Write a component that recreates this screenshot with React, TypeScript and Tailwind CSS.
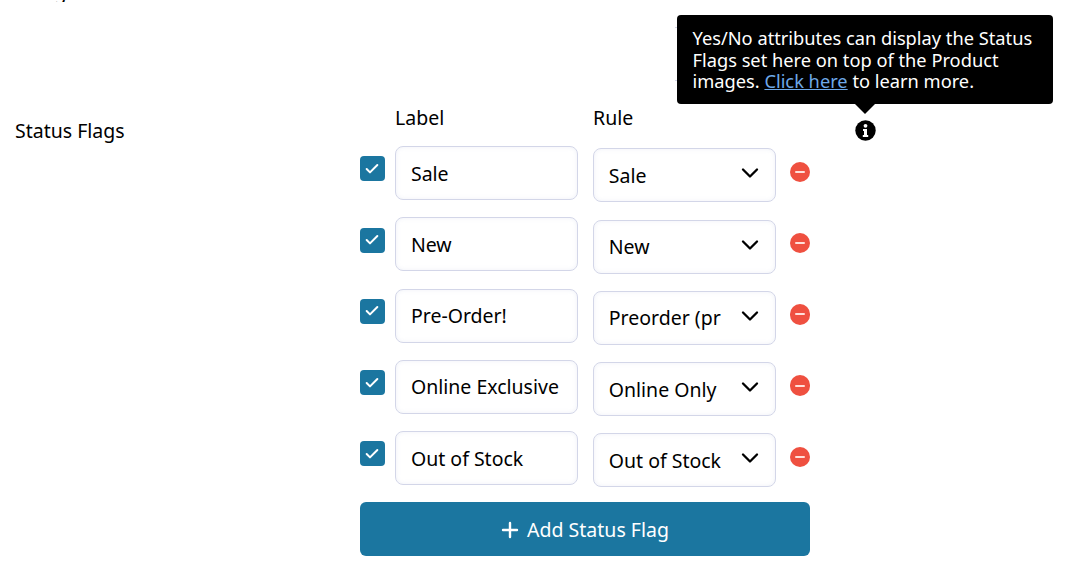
import React from 'react';
import { Check, ChevronDown, Plus } from 'lucide-react';

const flags = [
  { label: 'Sale', rule: 'Sale' },
  { label: 'New', rule: 'New' },
  { label: 'Pre-Order!', rule: 'Preorder (pr' },
  { label: 'Online Exclusive', rule: 'Online Only' },
  { label: 'Out of Stock', rule: 'Out of Stock' },
];

function FlagRow({ label, rule }: { label: string; rule: string }) {
  return (
    <div className="flex items-start h-[54px]">
      <div className="w-[25px] h-[25px] mt-[10.25px] rounded-[4px] bg-[#1b76a0] flex items-center justify-center text-white">
        <Check size={16} strokeWidth={3} />
      </div>
      <div className="ml-[10px] w-[183.25px] h-[54px] pl-[15px] pt-[1px] flex items-center border border-[#d3d6e8] rounded-[8px] shadow-[inset_0_0_4px_rgba(200,205,230,0.3)]">
        {label}
      </div>
      <div className="ml-[15px] mt-[2.25px] w-[183.25px] h-[54px] pl-[15px] flex items-center relative border border-[#d3d6e8] rounded-[8px] shadow-[inset_0_0_4px_rgba(200,205,230,0.3)]">
        <span className="pt-[1px]">{rule}</span>
        <ChevronDown size={28} strokeWidth={2} className="absolute right-[11px] top-[10px] text-black" />
      </div>
      <div className="ml-[14px] mt-[15.6px] w-[20.5px] h-[20.5px] rounded-full bg-[#ef5040] flex items-center justify-center">
        <div className="w-[10px] h-[2px] bg-[#ffe0da] rounded-sm" />
      </div>
    </div>
  );
}

export default function App() {
  return (
    <div className="relative w-[1066px] h-[566px] overflow-hidden bg-white text-black text-[19.5px] leading-[24px] font-['Noto_Sans',sans-serif]">
      <div className="h-[2px] overflow-hidden pl-[15px]">
        <div className="-mt-[20px]">Design</div>
      </div>

      <div className="flex pt-[104px]">
        <div className="w-[360px] pl-[15px] pt-[13px]">Status Flags</div>
        <div className="w-[450px]">
          <div className="flex h-[24px] mb-[16px] pl-[35px]">
            <div className="w-[198px]">Label</div>
            <div>Rule</div>
          </div>
          <div className="flex flex-col gap-[17.25px]">
            {flags.map((f) => (
              <FlagRow key={f.label} label={f.label} rule={f.rule} />
            ))}
          </div>
          <button className="mt-[17px] w-[450px] h-[54px] pt-[1px] pr-[3px] rounded-[6px] bg-[#1b76a0] text-white flex items-center justify-center gap-[5px]">
            <Plus size={24} strokeWidth={2.4} />
            Add Status Flag
          </button>
        </div>
      </div>

      {/* Faint edges of the field behind the tooltip */}
      <div className="absolute left-[675px] top-[27px] w-[2px] h-[1px] bg-[#d3d6e8]" />
      <div className="absolute left-[675px] top-[80px] w-[2px] h-[1px] bg-[#d3d6e8]" />

      {/* Tooltip */}
      <div className="absolute left-[677px] top-[15px] w-[376px] h-[89px] rounded-[4px] bg-black text-white pl-[15.5px] pr-[10px] pt-[12px] text-[18.25px] leading-[21.6px]">
        Yes/No attributes can display the Status Flags set here on top of the Product images.{' '}
        <a className="text-[#6ea8e8] underline">Click here</a> to learn more.
      </div>
      <div className="absolute left-[855px] top-[104px] w-0 h-0 border-l-[10px] border-r-[10px] border-t-[10px] border-l-transparent border-r-transparent border-t-black" />
      <svg className="absolute left-[855px] top-[120px]" width="21" height="21" viewBox="0 0 21 21">
        <circle cx="10.5" cy="10.5" r="10.2" fill="#000" />
        <circle cx="10.5" cy="5.8" r="1.9" fill="#fff" />
        <path d="M8 9h4v6h1.2v2H7.8v-2h1.2v-4H8z" fill="#fff" />
      </svg>
    </div>
  );
}
